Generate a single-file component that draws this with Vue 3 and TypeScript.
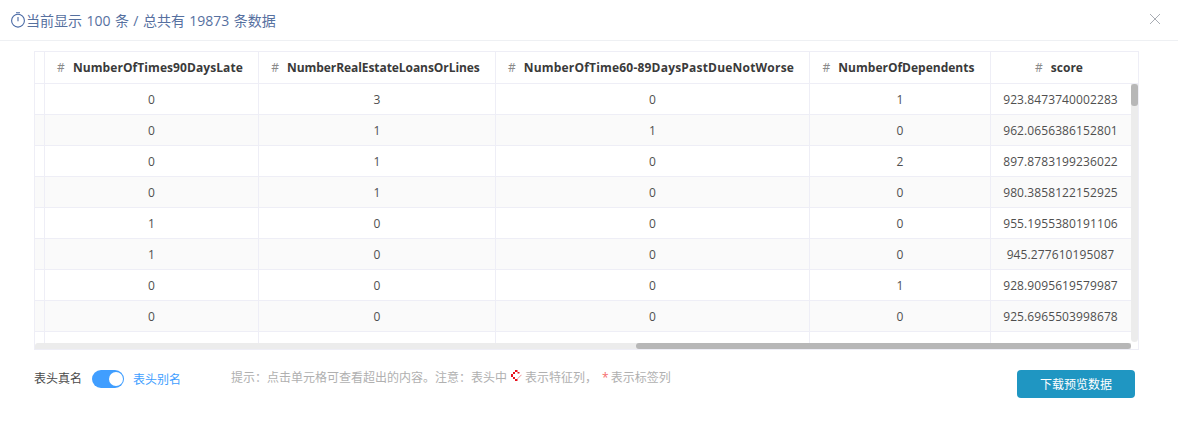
<script setup lang="ts">
const columns: string[] = [
  'NumberOfTimes90DaysLate',
  'NumberRealEstateLoansOrLines',
  'NumberOfTime60-89DaysPastDueNotWorse',
  'NumberOfDependents',
  'score',
]
const rows: string[][] = [
  ['0', '3', '0', '1', '923.8473740002283'],
  ['0', '1', '1', '0', '962.0656386152801'],
  ['0', '1', '0', '2', '897.8783199236022'],
  ['0', '1', '0', '0', '980.3858122152925'],
  ['1', '0', '0', '0', '955.1955380191106'],
  ['1', '0', '0', '0', '945.277610195087'],
  ['0', '0', '0', '1', '928.9095619579987'],
  ['0', '0', '0', '0', '925.6965503998678'],
  ['', '', '', '', ''],
]
</script>

<template>
  <div class="dialog">
    <header class="head">
      <svg class="clock" width="16" height="16" viewBox="0 0 16 16" fill="none" stroke="#4a6aa5" stroke-width="1.1">
        <circle cx="8" cy="8.7" r="6.4" />
        <path d="M8 5V9.2M6 .8h4" />
      </svg>
      <span class="title">当前显示 100 条 / 总共有 19873 条数据</span>
      <svg class="close" width="12" height="12" viewBox="0 0 12 12" fill="none" stroke="#a9adb4" stroke-width="1">
        <path d="M1 1l10 10M11 1L1 11" />
      </svg>
    </header>

    <section class="table">
      <div class="grid">
        <div class="row row-head">
          <div class="cell"></div>
          <div v-for="c in columns" :key="c" class="cell th"><i class="hash">#</i><b>{{ c }}</b></div>
        </div>
        <div v-for="(r, i) in rows" :key="i" class="row" :class="{ odd: i % 2 === 1 }">
          <div class="cell"></div>
          <div v-for="(v, j) in r" :key="j" class="cell">{{ v }}</div>
        </div>
      </div>
      <div class="track-y"><div class="thumb-y"></div></div>
      <div class="track-x"><div class="thumb-x"></div></div>
    </section>

    <footer class="foot">
      <span class="label">表头真名</span>
      <span class="switch"><span class="knob"></span></span>
      <span class="alias">表头别名</span>
      <span class="hint">
        <span>提示：点击单元格可查看超出的内容。注意：表头中</span>
        <svg class="feature" width="12" height="12" viewBox="0 0 12 12" fill="none">
          <path d="M5 0h2.5v2H5zM3 2h2v2H3zM1 4h2v3H1zM3 7h2v2H3zM5 9h2.5v2H5zM7.5 2h2v1.5h-2z" fill="#e8101c" />
          <path d="M7.5 8.8L11.5 4.8" stroke="#f09095" stroke-width="1" />
        </svg>
        <span>表示特征列，</span>
        <em class="star">*</em>
        <span>表示标签列</span>
      </span>
      <button class="download" type="button">下载预览数据</button>
    </footer>
  </div>
</template>

<style>
html, body { margin: 0; background: #fff; }
</style>

<style scoped>
.dialog {
  width: 1178px;
  height: 422px;
  box-sizing: border-box;
  overflow: hidden;
  background: #fff;
  font-family: "Open Sans", "Noto Sans CJK SC", sans-serif;
  color: #4d4d4d;
}
.head {
  height: 41px;
  box-sizing: border-box;
  border-bottom: 1px solid #eef0f3;
  display: flex;
  align-items: center;
  padding: 0 17px 0 10px;
}
.clock { flex: none; }
.title { font-size: 14px; color: #56709f; line-height: 20px; margin-top: 1px; word-spacing: 0.8px; }
.close { margin-left: auto; margin-top: -3px; }
.table {
  position: relative;
  width: 1105px;
  height: 299px;
  margin: 10px 0 0 34px;
  box-sizing: border-box;
  border: 1px solid #eeeef6;
  overflow: hidden;
}
.row {
  display: grid;
  grid-template-columns: 10px 214px 237px 314px 181px 141px;
  height: 31px;
  box-sizing: border-box;
  border-bottom: 1px solid #eeeef6;
}
.row-head { height: 32px; }
.odd { background: #fafafa; }
.cell {
  border-right: 1px solid #eeeef6;
  display: flex;
  align-items: center;
  justify-content: center;
  font-size: 12px;
  letter-spacing: 0.1px;
  color: #4f4f4f;
  white-space: nowrap;
  min-width: 0;
}
.cell:last-child { border-right: 0; padding-right: 2px; }
.th { padding-right: 3px; letter-spacing: 0; }
.th:last-child { padding-right: 5px; }
.th b { font-weight: 700; color: #3a3a3a; }
.th:nth-child(2) b { letter-spacing: 0.08px; }
.th:nth-child(3) b { letter-spacing: -0.07px; }
.th:nth-child(4) b { letter-spacing: 0.2px; }
.hash { font-style: normal; color: #8a8a8a; margin-right: 8px; }
.track-y {
  position: absolute;
  top: 32px;
  right: 0;
  width: 7px;
  bottom: 7px;
  background: #ececec;
  border-radius: 0 0 4px 4px;
}
.thumb-y {
  width: 7px;
  height: 22px;
  background: #b7b7b7;
  border-radius: 3px;
}
.track-x {
  position: absolute;
  left: 0;
  right: 7px;
  bottom: 0;
  height: 6px;
  background: #ececec;
  border-radius: 3px 0 0 0;
}
.thumb-x {
  position: absolute;
  left: 601px;
  right: 0;
  top: 0;
  height: 6px;
  background: #b7b7b7;
  border-radius: 3px;
}
.foot {
  position: relative;
  display: flex;
  align-items: flex-start;
  height: 30px;
  margin-top: 20px;
  padding-left: 34px;
  font-size: 12px;
  line-height: 18px;
}
.label { color: #4a4a4a; margin-right: 10px; }
.switch {
  position: relative;
  width: 32px;
  height: 18px;
  border-radius: 9px;
  background: #409eff;
  margin-right: 9px;
}
.knob {
  position: absolute;
  top: 2px;
  right: 1px;
  width: 14px;
  height: 14px;
  border-radius: 50%;
  background: #fff;
}
.alias { color: #409eff; margin-right: 50px; margin-top: 1px; }
.hint {
  color: #b0b0b0;
  display: flex;
  align-items: flex-start;
  white-space: nowrap;
  margin-top: -1px;
}
.feature { margin: 1px 3px 0 3px; flex: none; }
.star { color: #f56c6c; font-style: normal; margin: 0 2px 0 5px; }
.download {
  position: absolute;
  left: 1017px;
  top: 0;
  width: 118px;
  height: 28px;
  border: 0;
  border-radius: 4px;
  background: #1f96c2;
  color: #fff;
  font: inherit;
  font-size: 12px;
  padding: 1px 0 0;
}
</style>
